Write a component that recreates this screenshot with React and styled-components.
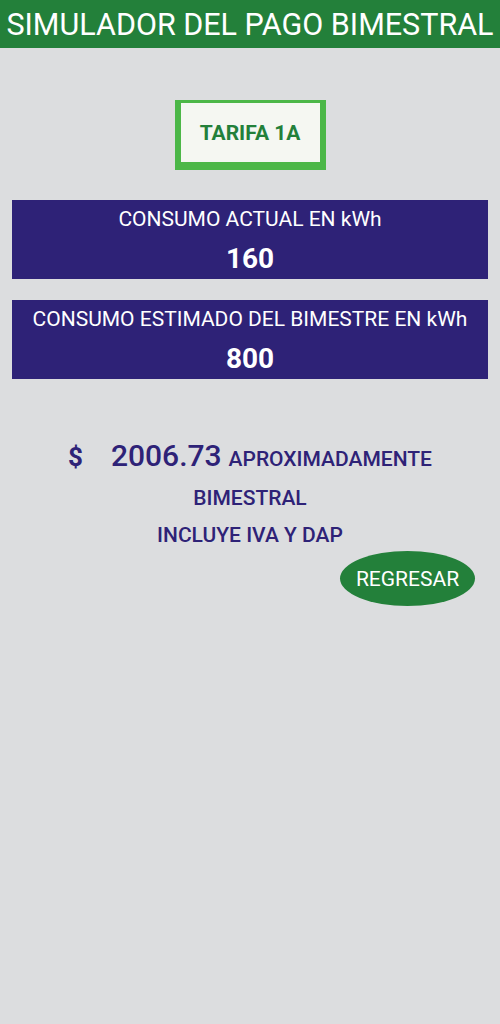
import React from 'react';
import styled, { createGlobalStyle } from 'styled-components';

const GlobalStyle = createGlobalStyle`
  html, body {
    margin: 0;
    padding: 0;
    background: #dcdddf;
  }
  body {
    font-family: Roboto, "Noto Sans", sans-serif;
  }
`;

const App = () => {
  return (
    <Page>
      <GlobalStyle />
      <Header>
        <Title>SIMULADOR DEL PAGO BIMESTRAL</Title>
      </Header>
      <TarifaBox>TARIFA 1A</TarifaBox>
      <Panels>
        {PANELS.map(panel => {
          return (
            <Panel key={panel.id}>
              <PanelLabel>{panel.label}</PanelLabel>
              <PanelValue>{panel.value}</PanelValue>
            </Panel>
          );
        })}
      </Panels>
      <Result>
        <AmountRow>
          <Dollar>$</Dollar>
          <Amount>2006.73</Amount>
          <Note>APROXIMADAMENTE</Note>
        </AmountRow>
        <Note>BIMESTRAL</Note>
        <Note>INCLUYE IVA Y DAP</Note>
      </Result>
      <Actions>
        <BackBtn type="button">REGRESAR</BackBtn>
      </Actions>
    </Page>
  );
};

const PANELS = [
  {
    id: 1,
    label: 'CONSUMO ACTUAL EN kWh',
    value: '160',
  },
  {
    id: 2,
    label: 'CONSUMO ESTIMADO DEL BIMESTRE EN kWh',
    value: '800',
  },
];

const Page = styled.div`
  min-height: 1024px;
  background: #dcdddf;
`;

const Header = styled.header`
  display: flex;
  align-items: center;
  justify-content: center;
  height: 48px;
  background: #23803a;
`;

const Title = styled.h1`
  margin: 0;
  font-size: 30.5px;
  font-weight: 400;
  color: #fff;
  white-space: nowrap;
`;

const TarifaBox = styled.div`
  display: flex;
  align-items: center;
  justify-content: center;
  box-sizing: border-box;
  width: 151px;
  height: 70px;
  margin: 52px auto 0;
  border: solid #4cb748;
  border-width: 3px 6px 8px 6px;
  background: #f5f7f2;
  font-size: 21px;
  font-weight: 700;
  color: #23803a;
`;

const Panels = styled.div`
  display: flex;
  flex-direction: column;
  gap: 21px;
  margin-top: 30px;
  padding: 0 12px 0 12px;
`;

const Panel = styled.div`
  display: flex;
  flex-direction: column;
  align-items: center;
  height: 79px;
  background: #2e2277;
  color: #fff;
`;

const PanelLabel = styled.div`
  margin-top: 5px;
  font-size: 21px;
  line-height: 28px;
`;

const PanelValue = styled.div`
  margin-top: 9px;
  font-size: 28px;
  font-weight: 700;
  line-height: 34px;
`;

const Result = styled.div`
  display: flex;
  flex-direction: column;
  align-items: center;
  gap: 13px;
  margin-top: 59px;
  color: #2e2277;
`;

const AmountRow = styled.div`
  display: flex;
  align-items: baseline;
`;

const Dollar = styled.span`
  margin-right: 28px;
  font-size: 26px;
  font-weight: 700;
`;

const Amount = styled.span`
  margin-right: 7px;
  font-size: 30px;
  font-weight: 500;
`;

const Note = styled.span`
  font-size: 21px;
  font-weight: 500;
`;

const Actions = styled.div`
  display: flex;
  justify-content: flex-end;
  margin-top: 4px;
  padding-right: 25px;
`;

const BackBtn = styled.button`
  width: 135px;
  height: 55px;
  padding: 0;
  border: 0;
  border-radius: 50%;
  background: #23803a;
  font-family: Roboto, "Noto Sans", sans-serif;
  font-size: 21px;
  color: #fff;
`;

export default App;
